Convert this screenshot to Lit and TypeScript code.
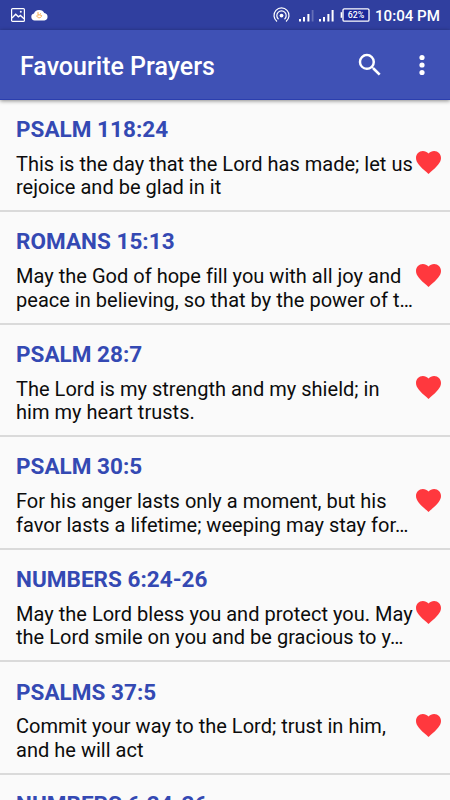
import { LitElement, html, css } from "lit";
import { customElement, property } from "lit/decorators.js";

interface Prayer {
  ref: string;
  lines: string[];
}

const PRAYERS: Prayer[] = [
  { ref: "PSALM 118:24", lines: ["This is the day that the Lord has made; let us", "rejoice and be glad in it"] },
  { ref: "ROMANS 15:13", lines: ["May the God of hope fill you with all joy and", "peace in believing, so that by the power of t…"] },
  { ref: "PSALM 28:7", lines: ["The Lord is my strength and my shield; in", "him my heart trusts."] },
  { ref: "PSALM 30:5", lines: ["For his anger lasts only a moment, but his", "favor lasts a lifetime; weeping may stay for…"] },
  { ref: "NUMBERS 6:24-26", lines: ["May the Lord bless you and protect you. May", "the Lord smile on you and be gracious to y…"] },
  { ref: "PSALMS 37:5", lines: ["Commit your way to the Lord; trust in him,", "and he will act"] },
  { ref: "NUMBERS 6:24-26", lines: [] },
];

@customElement("status-bar")
export class StatusBar extends LitElement {
  static styles = css`
    :host { display: flex; align-items: center; height: 30px; box-sizing: border-box; padding: 0 10px 0 11px; background: #303f9f; color: #fff; }
    svg { display: block; flex: none; }
    .cloud { margin-left: 6px; }
    .gap { flex: 1; }
    .signal { margin-left: 8px; }
    .signal + .signal { margin-left: 4px; }
    .battery { margin-left: 6px; }
    .level { font: 500 9px Roboto, sans-serif; }
    .time { margin-left: 5px; width: 65px; font: 500 15.1px/30px Roboto, sans-serif; padding-top: 1px; white-space: nowrap; }
  `;

  render() {
    return html`
      <svg width="14" height="14" viewBox="0 0 14 14" fill="none" stroke="#fff">
        <rect x=".6" y=".6" width="12.8" height="12.8" rx="1" stroke-width="1.2" />
        <path d="M1 10 4.7 6.2 7.4 8.8 9.4 7.4 13 10.7" stroke-width="1.3" />
        <circle cx="9.8" cy="3.8" r="1" fill="#fff" stroke="none" />
      </svg>
      <svg class="cloud" width="17" height="12" viewBox="0 0 17 12">
        <path d="M3.6 11.5A3.5 3.5 0 0 1 3 4.6 5.5 5 0 0 1 13.3 4 3.8 3.8 0 0 1 13.4 11.5Z" fill="#fff" />
        <path d="M7 3v4.2M5.8 6.5c0 3 4.8 3 4.8 0L7.3 5.5M9.5 4.3v1" fill="none" stroke="#f5ad55" stroke-width="1" />
      </svg>
      <div class="gap"></div>
      <svg width="17" height="16" viewBox="0 0 17 16" fill="none" stroke="#fff" stroke-width="1.2">
        <path d="M4 14.4A7.5 7.5 0 1 1 13 14.4" />
        <path d="M5.5 12.2A4.7 4.7 0 1 1 11.5 12.2" />
        <circle cx="8.5" cy="8.6" r="1.9" fill="#fff" stroke="none" />
      </svg>
      <svg class="signal" width="16" height="13" viewBox="0 0 16 13" fill="#fff">
        <path d="M1 10h2v2.5H1zM5 8h2v4.5H5zM9.4 5h2v7.5h-2z" />
        <path d="M13.7 1h1.8v11.5h-1.8z" opacity=".25" />
      </svg>
      <svg class="signal" width="16" height="13" viewBox="0 0 16 13" fill="#fff">
        <path d="M1 10h2v2.5H1zM5 8h2v4.5H5zM9.4 5h2v7.5h-2zM13.6 1h2v11.5h-2z" />
      </svg>
      <svg class="battery" width="30" height="14" viewBox="0 0 30 14">
        <rect x="3" y=".8" width="26" height="12.4" rx="1.3" fill="#1c2899" stroke="#fff" stroke-width="1.3" />
        <path d="M1.4 4.2v5.6" stroke="#fff" stroke-width="1.5" />
        <text class="level" x="15.9" y="10.2" text-anchor="middle" fill="#fff" textLength="16.5" lengthAdjust="spacingAndGlyphs">62%</text>
      </svg>
      <div class="time">10:04 PM</div>
    `;
  }
}

@customElement("title-bar")
export class TitleBar extends LitElement {
  static styles = css`
    :host { display: flex; align-items: center; height: 70px; box-sizing: border-box; padding: 0 24.6px 0 20px; background: #3f51b5; border-bottom: 1px solid #2b3eae; box-shadow: 0 1px 4px rgba(0, 0, 0, 0.45); color: #fff; position: relative; }
    .title { flex: 1; font: 500 25px/70px Roboto, sans-serif; padding-top: 4px; white-space: nowrap; }
    svg { display: block; flex: none; }
    .more { margin-left: 34.5px; }
  `;

  render() {
    return html`
      <div class="title">Favourite Prayers</div>
      <svg width="30" height="30" viewBox="0 0 24 24" fill="#fff">
        <path d="M15.5 14h-.79l-.28-.27A6.47 6.47 0 0 0 16 9.5 6.5 6.5 0 1 0 9.5 16c1.61 0 3.09-.59 4.23-1.57l.27.28v.79l5 4.99L20.49 19l-4.99-5zm-6 0C7.01 14 5 11.99 5 9.5S7.01 5 9.5 5 14 7.01 14 9.5 11.99 14 9.5 14z" />
      </svg>
      <svg class="more" width="6" height="22" viewBox="0 0 6 22" fill="#fff">
        <circle cx="3" cy="3.5" r="2.6" /><circle cx="3" cy="11" r="2.6" /><circle cx="3" cy="18.5" r="2.6" />
      </svg>
    `;
  }
}

@customElement("prayer-row")
export class PrayerRow extends LitElement {
  @property({ attribute: false }) prayer!: Prayer;

  static styles = css`
    :host { display: block; height: 112.55px; box-sizing: border-box; padding: 15.2px 0 0 16px; border-bottom: 2px solid #dadada; }
    .ref { font: 700 22.5px/28px Roboto, sans-serif; color: #3449b3; white-space: nowrap; letter-spacing: 0.03px; }
    .body { display: flex; margin-top: 9.8px; align-items: flex-start; }
    .text { width: 400px; font: 400 20px/23.7px Roboto, sans-serif; letter-spacing: 0.02px; color: #0c0c0c; white-space: nowrap; }
    .heart { display: block; flex: none; margin-top: -1.4px; }
  `;

  render() {
    return html`
      <div class="ref">${this.prayer.ref}</div>
      <div class="body">
        <div class="text">${this.prayer.lines.map((l) => html`<div>${l}</div>`)}</div>
        <svg class="heart" width="25" height="23" viewBox="2 3 20 18.35" preserveAspectRatio="none">
          <path fill="#ff383e" d="M12 21.35l-1.45-1.32C5.4 15.36 2 12.28 2 8.5 2 5.42 4.42 3 7.5 3c1.74 0 3.41.81 4.5 2.09C13.09 3.81 14.76 3 16.5 3 19.58 3 22 5.42 22 8.5c0 3.78-3.4 6.86-8.55 11.54L12 21.35z" />
        </svg>
      </div>
    `;
  }
}

@customElement("app-root")
export class AppRoot extends LitElement {
  static styles = css`
    :host { display: block; width: 450px; height: 800px; overflow: hidden; background: #fafafa; }
    main { margin-top: -0.4px; }
  `;

  render() {
    return html`
      <status-bar></status-bar>
      <title-bar></title-bar>
      <main>${PRAYERS.map((p) => html`<prayer-row .prayer=${p}></prayer-row>`)}</main>
    `;
  }
}
